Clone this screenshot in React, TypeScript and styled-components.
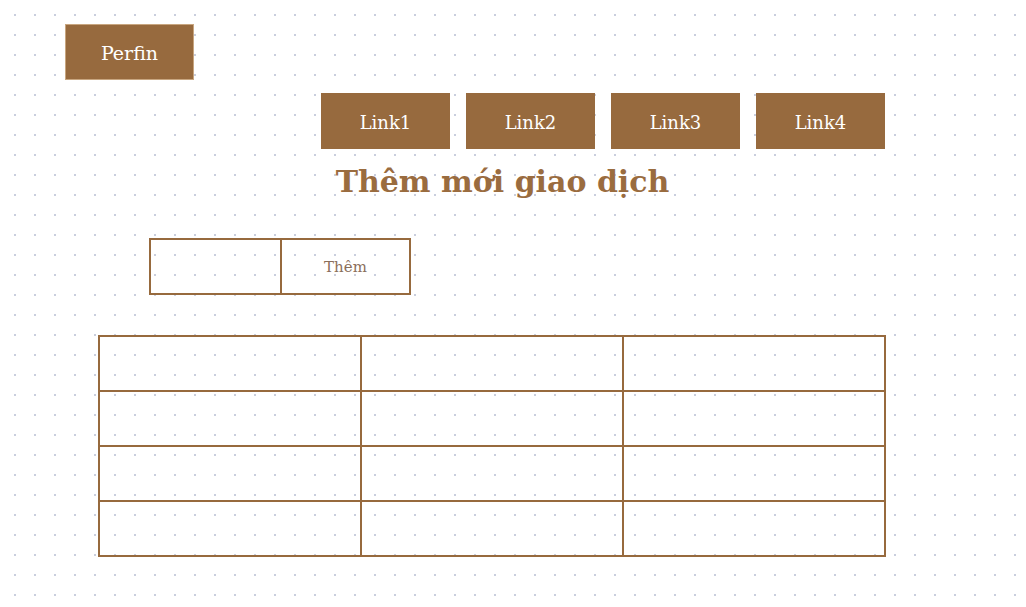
import React from "react";
import styled, { createGlobalStyle } from "styled-components";

const BROWN = "#976a3e";

const Global = createGlobalStyle`
  html, body { margin: 0; padding: 0; }
  body {
    background-color: #ffffff;
    background-image: radial-gradient(circle, #c9cedd 0.9px, transparent 1.2px);
    background-size: 20px 20px;
    background-position: 5px 5px;
    min-height: 607px;
    font-family: "DejaVu Serif", "Liberation Serif", serif;
  }
`;

const Page = styled.div`
  display: flex;
  flex-direction: column;
  align-items: flex-start;
  padding-top: 24px;
`;

const Brand = styled.div`
  margin-left: 65px;
  width: 129px;
  height: 56px;
  box-sizing: border-box;
  background: ${BROWN};
  border: 1px solid #c8a680;
  color: #fff;
  display: flex;
  align-items: center;
  justify-content: center;
  padding-top: 2px;
  font-size: 19px;
  font-family: "DejaVu Serif", serif;
`;

const Nav = styled.nav`
  display: flex;
  gap: 16px;
  margin-left: 321px;
  margin-top: 13px;
`;

const NavLink = styled.a`
  width: 129px;
  height: 56px;
  box-sizing: border-box;
  background: ${BROWN};
  color: #fff;
  display: flex;
  align-items: center;
  justify-content: center;
  padding-top: 2px;
  font-size: 18px;
  text-decoration: none;
  font-family: "DejaVu Serif", serif;
`;

const Title = styled.h1`
  margin: 13px 0 0 0;
  width: 1005px;
  text-align: center;
  font-size: 30px;
  font-weight: bold;
  color: #9a6c3f;
  font-family: "DejaVu Serif", serif;
  line-height: 40px;
`;

const FormRow = styled.div`
  margin-left: 149px;
  margin-top: 36px;
  display: grid;
  grid-template-columns: 129px 129px;
  width: 262px;
  height: 57px;
  box-sizing: border-box;
  border: 2px solid ${BROWN};
`;

const FormCell = styled.div<{ $divider?: boolean }>`
  display: flex;
  align-items: center;
  justify-content: center;
  border-left: ${(p) => (p.$divider ? `2px solid ${BROWN}` : "none")};
  color: #8a6e5a;
  font-size: 15px;
  font-family: "DejaVu Serif", serif;
`;

const Table = styled.table`
  margin-left: 98px;
  margin-top: 40px;
  border-collapse: collapse;
  border: 2px solid ${BROWN};
`;

const Td = styled.td`
  border: 2px solid ${BROWN};
  width: 260px;
  height: 53px;
  padding: 0;
`;

export default function App() {
  const rows = [0, 1, 2, 3];
  const cols = [0, 1, 2];
  return (
    <>
      <Global />
      <Page>
        <Brand>Perfin</Brand>
        <Nav>
          <NavLink>Link1</NavLink>
          <NavLink>Link2</NavLink>
          <NavLink>Link3</NavLink>
          <NavLink>Link4</NavLink>
        </Nav>
        <Title>Thêm mới giao dịch</Title>
        <FormRow>
          <FormCell />
          <FormCell $divider>Thêm</FormCell>
        </FormRow>
        <Table>
          <tbody>
            {rows.map((r) => (
              <tr key={r}>
                {cols.map((c) => (
                  <Td key={c} />
                ))}
              </tr>
            ))}
          </tbody>
        </Table>
      </Page>
    </>
  );
}
